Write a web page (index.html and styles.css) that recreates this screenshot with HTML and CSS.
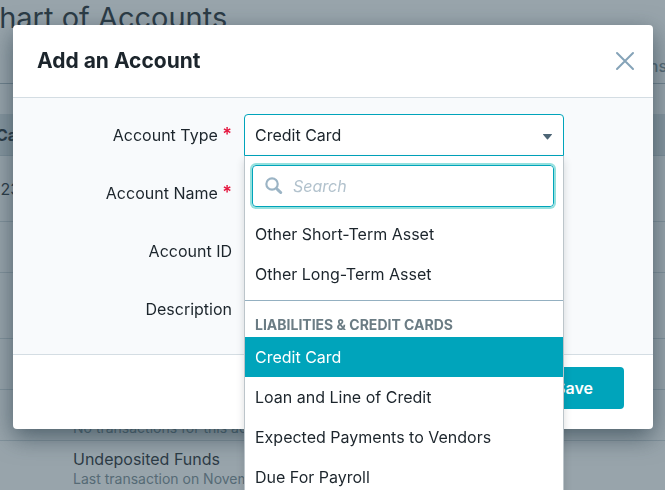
FILE: index.html
```html
<!DOCTYPE html>
<html lang="en">
<head>
  <meta charset="UTF-8" />
  <meta name="viewport" content="width=device-width, initial-scale=1" />
  <title>Chart of Accounts</title>
  <link rel="stylesheet" href="styles.css">
</head>
<body>
  <main class="page">
    <h1>Chart of Accounts</h1>
    <nav class="tabs">
      <a href="#">Transactions</a>
    </nav>

    <table class="accounts">
      <thead>
        <tr>
          <th colspan="2">Cash and Bank</th>
        </tr>
      </thead>
      <tbody>
        <tr class="tall">
          <td>123</td>
          <td></td>
        </tr>
        <tr>
          <td></td>
          <td></td>
        </tr>
        <tr class="tall">
          <td></td>
          <td></td>
        </tr>
        <tr>
          <td></td>
          <td></td>
        </tr>
        <tr>
          <td></td>
          <td>Petty Cash <small>No transactions for this account</small></td>
        </tr>
        <tr>
          <td></td>
          <td>Undeposited Funds <small>Last transaction on November 8</small></td>
        </tr>
      </tbody>
    </table>
  </main>

  <div class="overlay">
    <form class="modal" role="dialog" aria-labelledby="modal-title">
      <header class="modal-header">
        <h2 id="modal-title">Add an Account</h2>
        <button type="button" class="close" aria-label="Close">
          <svg width="20" height="20" viewBox="0 0 20 20" fill="none" stroke="#85a3b8" stroke-width="2" stroke-linecap="round">
            <path d="M2 2l16 16M18 2L2 18" />
          </svg>
        </button>
      </header>

      <div class="modal-body">
        <div class="field">
          <label for="type">Account Type <span class="required">*</span></label>
          <div class="dropdown">
            <select id="type">
              <option>Credit Card</option>
            </select>
            <svg class="caret" width="9" height="6" viewBox="0 0 9 6" fill="#4d6575">
              <path d="M.3 0h8.4q.5 .3 .1 .8L5 5.2q-.5 .5-1 0L.2 .8Q-.2 .3 .3 0z" />
            </svg>

            <div class="menu">
              <div class="search">
                <svg width="20" height="20" viewBox="0 0 20 20" fill="none" stroke="#9bb4c5">
                  <circle cx="7.8" cy="7.8" r="6.3" stroke-width="2.4" />
                  <path d="M12.4 12.4l1.5 1.5" stroke-width="2.5" />
                  <path d="M14 14l3.4 3.2" stroke-width="3.4" stroke-linecap="round" />
                </svg>
                <input type="text" placeholder="Search" aria-label="Search account types" />
              </div>
              <ul role="listbox" aria-label="Account types">
                <li role="option">Other Short-Term Asset</li>
                <li role="option">Other Long-Term Asset</li>
                <li class="group">Liabilities &amp; Credit Cards</li>
                <li role="option" class="selected" aria-selected="true">Credit Card</li>
                <li role="option">Loan and Line of Credit</li>
                <li role="option">Expected Payments to Vendors</li>
                <li role="option">Due For Payroll</li>
              </ul>
            </div>
          </div>
        </div>

        <div class="field">
          <label for="name">Account Name <span class="required">*</span></label>
          <input type="text" id="name" />
        </div>

        <div class="field">
          <label for="account-id">Account ID</label>
          <input type="text" id="account-id" />
        </div>

        <div class="field">
          <label for="description">Description</label>
          <input type="text" id="description" />
        </div>
      </div>

      <footer class="modal-footer">
        <button type="submit" class="save">Save</button>
      </footer>
    </form>
  </div>
</body>
</html>
```

FILE: styles.css
```css
* {
  box-sizing: border-box;
}

body {
  margin: 0;
  height: 100vh;
  overflow: hidden;
  background-color: #ffffff;
  color: #1c252c;
  font-family: Inter, "Liberation Sans", sans-serif;
  font-size: 16px;
  line-height: 24px;
}

/* page behind the dialog, scrolled slightly to the right */
.page {
  margin: 0 -32px 0 -22px;
}

h1 {
  margin: 0;
  font-size: 29px;
  font-weight: 400;
  line-height: 36px;
}

.tabs {
  display: flex;
  justify-content: flex-end;
  height: 48px;
  padding: 18px 30px 0 0;
  border-bottom: 1px solid #aab8c0;
}

.tabs a {
  color: #75878f;
  font-weight: 500;
  text-decoration: none;
}

.accounts {
  width: 100%;
  margin-top: 30px;
  border-collapse: separate;
  border-spacing: 0;
}

.accounts th {
  height: 42px;
  padding: 0 0 0 18px;
  background-color: #d9e1e5;
  border-bottom: 1px solid #c6d1d7;
  text-align: left;
  font-weight: 700;
}

.accounts td {
  height: 51px;
  padding: 6px 0 0;
  border-bottom: 1px solid #d0d9de;
  line-height: 20px;
}

.accounts td:first-child {
  width: 95px;
  padding: 0 0 0 16px;
}

.accounts .tall td {
  height: 66px;
}

.accounts small {
  display: block;
  color: #75878f;
  font-size: 14px;
}

.overlay {
  position: fixed;
  inset: 0;
  padding: 25px 12px 0 13px;
  background-color: rgba(57, 80, 94, 0.52);
}

.modal {
  max-width: 640px;
  margin: 0 auto;
  background-color: #ffffff;
  border-radius: 4px;
  box-shadow: 0 8px 24px rgba(28, 50, 64, 0.6);
}

.modal-header {
  display: flex;
  align-items: center;
  justify-content: space-between;
  height: 73px;
  padding: 0 18px 0 24px;
  border-bottom: 1px solid #d4dde3;
}

h2 {
  margin: 0;
  font-size: 21px;
  font-weight: 700;
}

button {
  border: none;
  font: inherit;
  cursor: pointer;
}

.close {
  display: flex;
  padding: 0;
  background: none;
}

.modal-body {
  display: grid;
  gap: 16px;
  padding: 16px 0 24px;
  background-color: #f8fafc;
}

.field {
  display: grid;
  grid-template-columns: 219px minmax(0, 320px);
  column-gap: 12px;
  align-items: center;
}

label {
  text-align: right;
}

.required {
  color: #e5173f;
  font-size: 18px;
  font-weight: 600;
  line-height: 20px;
}

input, select {
  width: 100%;
  height: 42px;
  padding: 0 10px;
  background-color: #ffffff;
  border: 1px solid #b2c2cd;
  border-radius: 4px;
  color: inherit;
  font: inherit;
}

select {
  display: block;
  appearance: none;
  border-color: #00a4bb;
  border-radius: 4px 4px 0 0;
}

.dropdown {
  position: relative;
}

.caret {
  position: absolute;
  top: 20px;
  right: 12px;
}

.menu {
  position: absolute;
  top: 100%;
  left: 0;
  right: 0;
  z-index: 1;
  height: 400px;
  background-color: #ffffff;
  border: solid #bcc5ca;
  border-width: 0 1px;
  box-shadow: 0 4px 8px rgba(28, 37, 44, 0.16);
}

.search {
  display: flex;
  align-items: center;
  gap: 10px;
  height: 42px;
  margin: 9px 9px 7px 7px;
  padding-left: 12px;
  border: 1px solid #00a4bb;
  border-radius: 4px;
  box-shadow: 0 0 0 2px #95e1de;
}

.search input {
  height: 40px;
  padding: 0;
  border: none;
  outline: none;
}

.search input::placeholder {
  color: #b2c2cd;
  font-style: italic;
}

.menu ul {
  margin: 0;
  padding: 0;
  list-style: none;
}

.menu li {
  padding: 8px 10px;
}

.menu .group {
  margin-top: 6px;
  padding: 12px 10px 0;
  border-top: 1px solid #94b0c1;
  color: #6b7c84;
  font-size: 14px;
  font-weight: 700;
  text-transform: uppercase;
}

.menu .selected {
  background-color: #00a4bb;
  color: #ffffff;
}

.modal-footer {
  display: flex;
  justify-content: flex-end;
  padding: 12px 29px 20px;
  border-top: 1px solid #d4dde3;
}

.save {
  width: 100px;
  height: 42px;
  background-color: #00a4bb;
  border-radius: 4px;
  color: #ffffff;
  font-weight: 600;
}
```
